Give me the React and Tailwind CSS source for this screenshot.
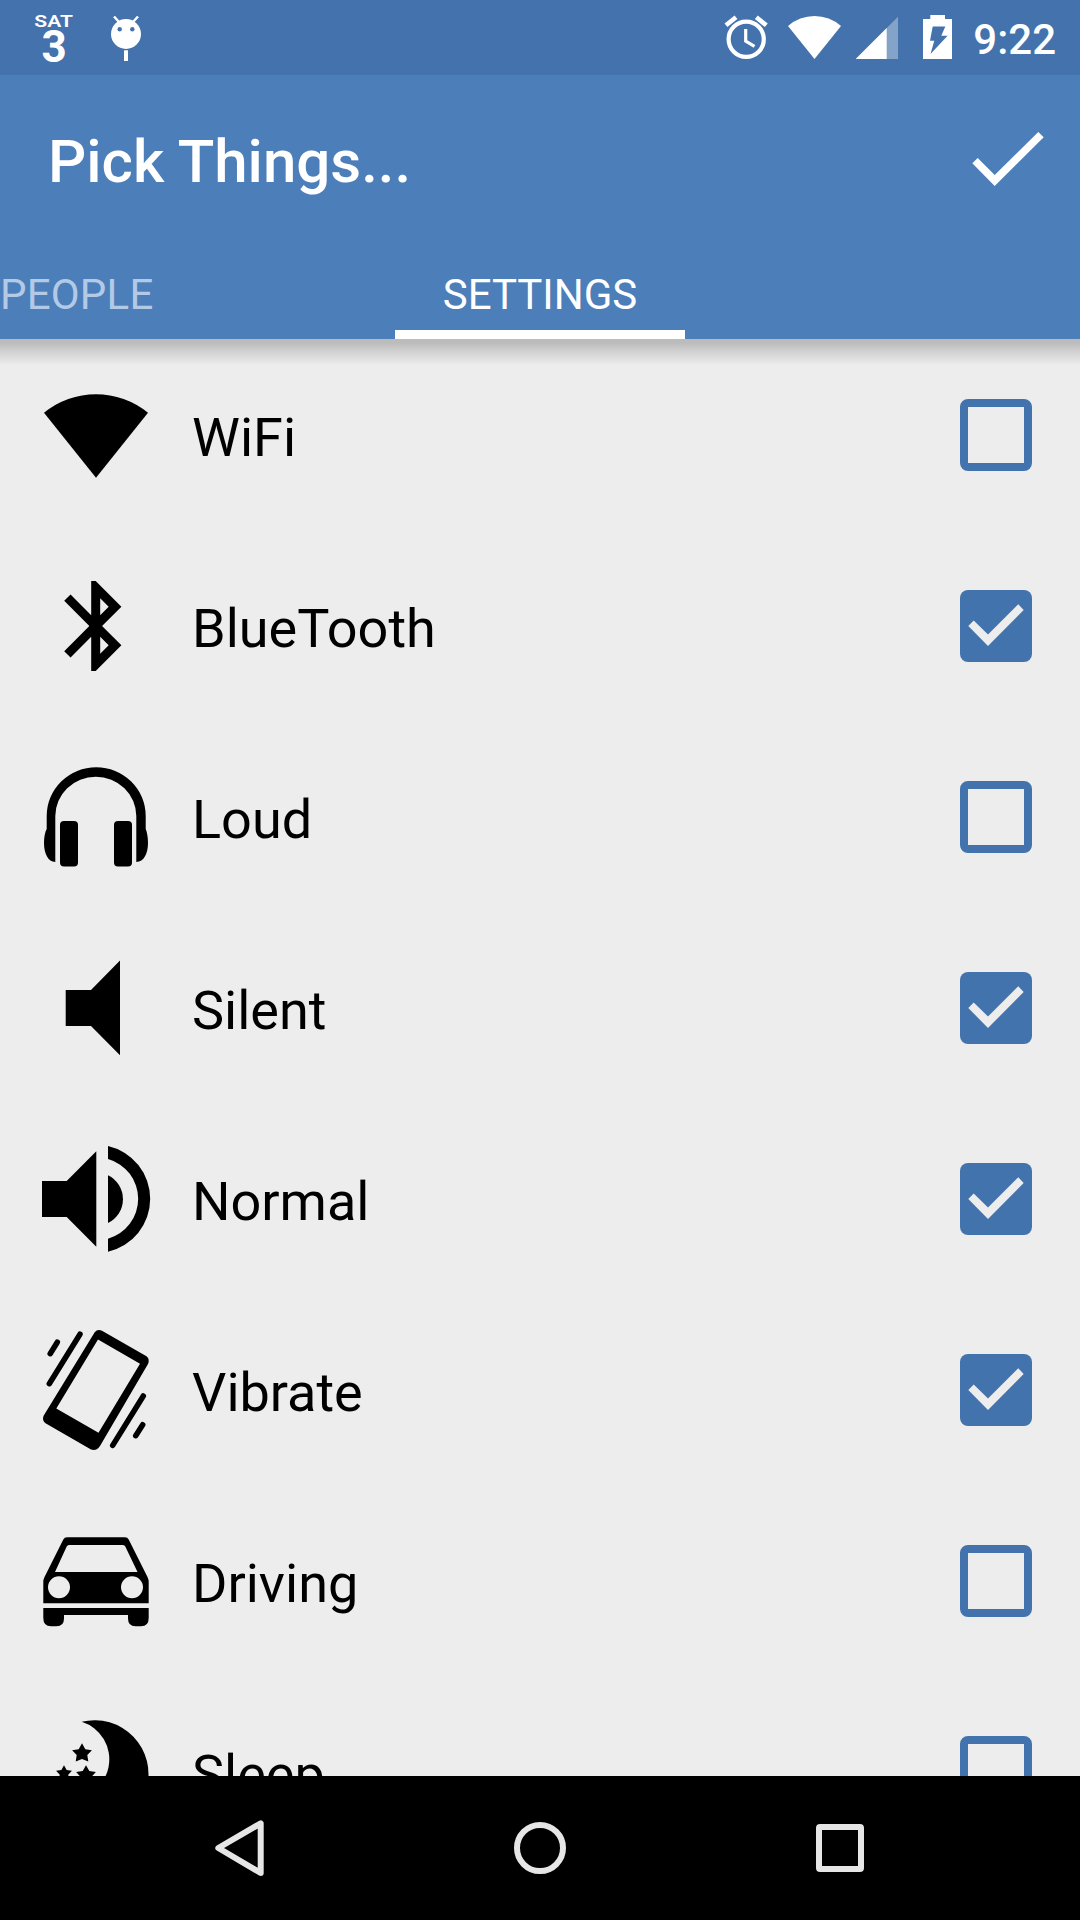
import { useState } from 'react';

const WifiIcon = () => <path d="M8 37.7 A82.3 82.3 0 0 1 112 37.7 L60 102.7 Z" />;

const BluetoothIcon = () => (
  <path
    transform="translate(5.7 6) scale(4.5)"
    d="M17.71 7.71L12 2h-1v7.59L6.41 5 5 6.41 10.59 12 5 17.59 6.41 19 11 14.41V22h1l5.71-5.71-4.3-4.29 4.3-4.29zM13 5.83l1.88 1.88L13 9.59V5.83zm1.88 10.46L13 18.17v-3.76l1.88 1.88z"
  />
);

const HeadphonesIcon = () => (
  <>
    <path d="M19.3 105 C12 105 8 96 8 86 C8 80 9 75 10.7 72 V59 A49.5 48.7 0 0 1 109.7 59 V72 C111 75 112 80 112 86 C112 96 108 105 100.3 105 V59 A40.5 39.3 0 0 0 19.3 59 Z" />
    <rect x="24" y="64" width="18" height="45.5" rx="4" />
    <rect x="78" y="64" width="18" height="45.5" rx="4" />
  </>
);

const SilentIcon = () => <path d="M29.7 42 H55 L84 12.5 V107.3 L55 78 H29.7 Z" />;

const NormalIcon = () => (
  <>
    <path d="M6 42 H30.7 L60.3 12.3 V107.7 L30.7 78 H6 Z" />
    <path d="M72 7 A54.2 54.2 0 0 1 72 112.7 V99.7 A41.4 41.4 0 0 0 72 20 Z" />
    <path d="M72 36.3 A26.5 26.5 0 0 1 72 84 Z" />
  </>
);

const VibrateIcon = () => (
  <g transform="translate(0 -13.3)">
    <path
      fillRule="evenodd"
      d="M58.7 15.5 Q61.5 12 66 14 L110.5 39.5 Q114 42 112 47.3 L64 129.3 Q60.5 134.7 55 132.8 L9.5 106.5 Q5.8 103.5 7.6 99 Z M62 22.8 L20.3 91.7 L62.5 116 L104 47 Z"
    />
    <path
      d="M44 17.5 L13.3 67 M21.3 25.5 L14.2 37 M107.3 79.3 L76.7 128.7 M106.7 108 L99.7 119"
      fill="none"
      stroke="black"
      strokeWidth="5.5"
      strokeLinecap="round"
    />
  </g>
);

const CarIcon = () => (
  <>
    <path
      fillRule="evenodd"
      d="M31 16.3 H89 Q91.5 16.3 92.7 18.5 L111.5 56 Q112.7 58.5 112.7 61 V82.3 H7.3 V61 Q7.3 58.5 8.5 56 L27.3 18.5 Q28.5 16.3 31 16.3 Z M33 24 Q31.4 24 30.7 25.5 L19 51 H101.5 L89.3 25.5 Q88.6 24 87 24 Z M12 66.3 a11 11 0 1 0 22 0 a11 11 0 1 0 -22 0 Z M85 66.3 a11 11 0 1 0 22 0 a11 11 0 1 0 -22 0 Z"
    />
    <path d="M7.3 87 H112.7 V97 Q112.7 105.3 105 105.3 H99.5 Q92 105.3 92 97.5 V94 H28 V97.5 Q28 105.3 20.5 105.3 H15 Q7.3 105.3 7.3 97 Z" />
  </>
);

const STAR = 'M0 -10 L3.3 -4.1 L9.9 -3.1 L5.3 1.8 L6.3 8.3 L0 5.6 L-6.3 8.3 L-5.3 1.8 L-9.9 -3.1 L-3.3 -4.1 Z';

const SleepIcon = () => (
  <>
    <path d="M45.7 9.7 A54 54 0 1 1 20 100 L30 86.5 A39.4 39.4 0 0 0 45.7 9.7 Z" />
    <path d={STAR} transform="translate(46 41.3)" />
    <path d={STAR} transform="translate(28 61.3) scale(0.8)" />
    <path d={STAR} transform="translate(50 63.2)" />
  </>
);

const initialSettings = [
  { id: 'wifi', label: 'WiFi', icon: WifiIcon, checked: false },
  { id: 'bluetooth', label: 'BlueTooth', icon: BluetoothIcon, checked: true },
  { id: 'loud', label: 'Loud', icon: HeadphonesIcon, checked: false },
  { id: 'silent', label: 'Silent', icon: SilentIcon, checked: true },
  { id: 'normal', label: 'Normal', icon: NormalIcon, checked: true },
  { id: 'vibrate', label: 'Vibrate', icon: VibrateIcon, checked: true },
  { id: 'driving', label: 'Driving', icon: CarIcon, checked: false },
  { id: 'sleep', label: 'Sleep', icon: SleepIcon, checked: false },
];

const StatusBar = () => (
  <div className="flex h-[75px] shrink-0 items-center justify-between bg-[#4372ac] pl-[34px] pr-6 text-white">
    <div className="flex items-center">
      <div className="flex w-10 flex-col items-center">
        <span className="scale-x-[1.24] text-[17px] font-semibold leading-[18px]">SAT</span>
        <span className="text-[44px] font-bold leading-[34px]">3</span>
      </div>
      <svg className="ml-9 h-[75px] w-8" viewBox="110 0 32 75" fill="white">
        <circle cx="126" cy="34" r="15" />
        <path d="M114 16.5 L120 23 M138 16.5 L132 23" stroke="white" strokeWidth="2.5" />
        <circle cx="119.7" cy="29.3" r="2.2" fill="#4372ac" />
        <circle cx="132.3" cy="29.3" r="2.2" fill="#4372ac" />
        <rect x="124" y="50.3" width="4" height="10.7" />
      </svg>
    </div>

    <div className="flex items-center">
      {/* Alarme */}
      <svg className="h-[75px] w-[48px]" viewBox="722 0 48 75" fill="none" stroke="white">
        <circle cx="746.2" cy="39.3" r="17.6" strokeWidth="4.2" />
        <path d="M726 25.3 L736 17.3 M756.3 17.3 L766.3 25.3" strokeWidth="4.6" />
        <path d="M745.7 29 V41 L754.5 46.3" strokeWidth="3.2" />
      </svg>
      {/* Wifi */}
      <svg className="ml-4 h-[75px] w-[56px]" viewBox="786 0 56 75" fill="white">
        <path d="M788 26 A40 40 0 0 1 841 26 L814.5 59 Z" />
      </svg>
      {/* Réseau */}
      <svg className="ml-3 h-[75px] w-[46px]" viewBox="854 0 46 75" fill="white">
        <path d="M898 16.7 V59 H855.7 Z" opacity="0.35" />
        <path d="M886.7 28 V59 H855.7 Z" />
      </svg>
      {/* Batterie */}
      <svg className="ml-5 h-[75px] w-[34px]" viewBox="920 0 34 75" fill="white">
        <path d="M930.3 15 H945 V19 H952 V59 H923 V19 H930.3 Z" />
        <path d="M932.7 26.5 H945.3 L941.3 35.7 H947.6 L930.5 54 L934.3 40.7 H930 Z" fill="#4372ac" />
      </svg>
      <span className="ml-[19px] pt-1 text-[42px] font-medium leading-none">9:22</span>
    </div>
  </div>
);

const Header = () => (
  <header className="shrink-0 bg-[#4c7eb9] text-white">
    <div className="flex h-[168px] items-center justify-between pl-12 pr-9">
      <h1 className="pt-[5px] text-[60px] font-medium leading-none">Pick Things...</h1>
      <button type="button" aria-label="Done">
        <svg className="h-[54px] w-[72px]" viewBox="0 0 72 54" fill="white">
          <path d="M0.3 31.3 L5.7 26 L22.7 43 L66.3 0 L71.7 5.3 L22.7 54 Z" />
        </svg>
      </button>
    </div>
    <div className="grid h-24 grid-cols-[395px_290px_395px] text-[42px] leading-none">
      <button type="button" className="flex items-center pt-[7px] tracking-[0.2px] text-[#b3cae6]">
        PEOPLE
      </button>
      <button type="button" className="flex items-center justify-center border-b-[9px] border-white pt-4">
        SETTINGS
      </button>
    </div>
  </header>
);

const Checkbox = ({ checked, label, onChange }) => (
  <button
    type="button"
    role="checkbox"
    aria-checked={checked}
    aria-label={label}
    onClick={onChange}
    className={`size-[72px] rounded-lg ${checked ? 'bg-[#4373ad]' : 'border-8 border-[#4373ad]'}`}
  >
    {checked && (
      <svg className="size-[72px]" viewBox="0 0 72 72" fill="#ededed">
        <path d="M8.3 36 L13.7 30.5 L28 44.5 L58.3 14.3 L63.7 20 L28 56 Z" />
      </svg>
    )}
  </button>
);

const SettingRow = ({ setting, onToggle }) => {
  const Icon = setting.icon;
  return (
    <li className="flex h-[191px] items-center pl-9 pr-12 pt-px">
      <svg className="size-[120px] shrink-0 overflow-visible" viewBox="0 0 120 120">
        <Icon />
      </svg>
      <span className="ml-9 flex-1 pt-[5px] text-[54px] leading-none text-black">{setting.label}</span>
      <Checkbox checked={setting.checked} label={setting.label} onChange={() => onToggle(setting.id)} />
    </li>
  );
};

const NavBar = () => (
  <nav className="flex h-36 shrink-0 items-center justify-between bg-black px-[210px]">
    <svg className="size-[60px]" viewBox="0 0 60 60" fill="none" stroke="#e6e6e6" strokeWidth="6">
      <path d="M50.7 5.3 V55 L8.3 30 Z" strokeLinejoin="round" />
    </svg>
    <svg className="size-[60px]" viewBox="0 0 60 60" fill="none" stroke="#e6e6e6" strokeWidth="6">
      <circle cx="30" cy="30" r="23" />
    </svg>
    <svg className="size-[60px]" viewBox="0 0 60 60" fill="none" stroke="#e6e6e6" strokeWidth="6">
      <rect x="9" y="9" width="42" height="42" rx="1" />
    </svg>
  </nav>
);

const App = () => {
  const [settings, setSettings] = useState(initialSettings);

  const handleToggle = (id) => {
    setSettings(settings.map((s) => (s.id === id ? { ...s, checked: !s.checked } : s)));
  };

  return (
    <div className="flex h-[1920px] w-[1080px] flex-col overflow-hidden bg-[#ededed] font-['Roboto',sans-serif]">
      <StatusBar />
      <Header />
      <main className="relative min-h-0 flex-1 overflow-hidden">
        {/* Ombre sous l'en-tête */}
        <div className="pointer-events-none absolute inset-x-0 top-0 h-[26px] bg-linear-to-b from-[#bcbcbc] from-15% via-[#d2d2d2] via-50% to-[#ededed]" />
        <ul>
          {settings.map((setting) => (
            <SettingRow key={setting.id} setting={setting} onToggle={handleToggle} />
          ))}
        </ul>
      </main>
      <NavBar />
    </div>
  );
};

export default App;
